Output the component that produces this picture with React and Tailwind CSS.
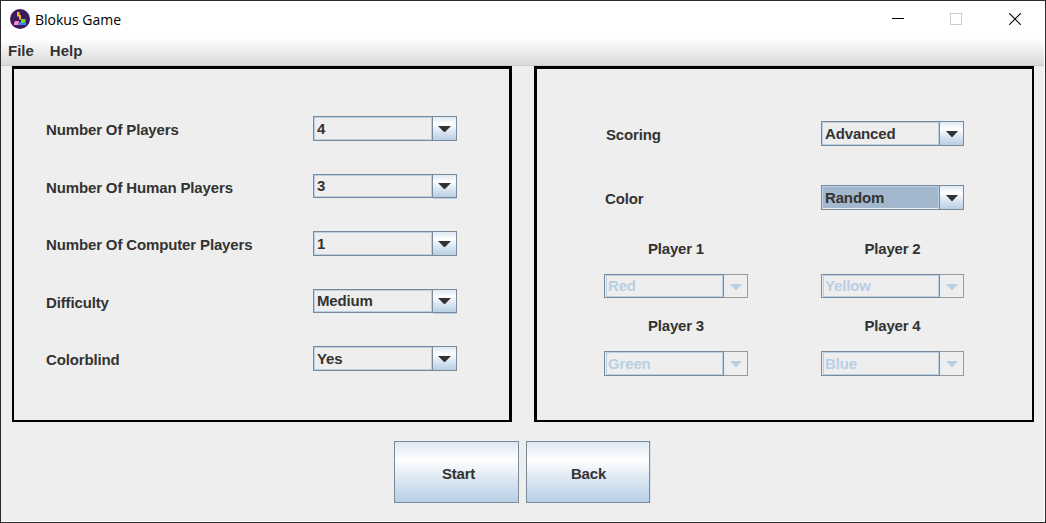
const LABEL = "font-['Liberation_Sans',Arial,sans-serif] text-[15px] leading-[18px] font-bold text-[#333] whitespace-nowrap";

function Arrow({ disabled, wide, className }) {
  return (
    <svg width="13" height="7" viewBox="0 0 13 7" className={className}>
      <path d={wide ? "M0 0H13L7 6H6Z" : "M0 0H12L6.5 6H5.5Z"} fill={disabled ? "#b8cfe5" : "#333"} />
    </svg>
  );
}

function Combo({ value, width = "w-[144px]", height = "h-[25px]", disabled, focused, short }) {
  const wide = width === "w-[144px]" && !disabled;
  const raised = short || height === "h-[24px]";
  return (
    <div className={`${LABEL} ${width} ${short ? "h-[24px]" : height} flex shrink-0 tracking-[-0.15px]`}>
      <div className="flex flex-1 border border-[#7a8a99]">
        <div
          className={`flex flex-1 border border-[#b8cfe5] ${disabled ? "ml-px pl-px" : "pl-[2px]"} ${focused ? "border-b-[#eee] bg-[#a3b8cc]" : ""}`}
        >
          <span className={`${raised ? "mt-px" : "mt-[2px]"} ${disabled ? "text-[#b8cfe5]" : ""}`}>{value}</span>
        </div>
      </div>
      <div
        className={`flex w-[24px] items-start border-y border-r ${
          disabled
            ? "border-[#999]"
            : "border-[#7a8a99] bg-[linear-gradient(180deg,#dde8f3_0%,#ffffff_30%,#dde8f3_60%,#b8cfe5_100%)]"
        } ${short ? "shadow-[0_1px_0_#b8cfe5]" : ""} ${wide ? "pl-[5px]" : "pl-[6px]"}`}
      >
        <Arrow disabled={disabled} wide={wide} className={short ? "mt-[8px]" : "mt-[9px]"} />
      </div>
    </div>
  );
}

function Row({ label, children, className }) {
  return (
    <div className={`flex items-start justify-between ${className}`}>
      <span className={`${LABEL} mt-[5px] tracking-[-0.14px]`}>{label}</span>
      {children}
    </div>
  );
}

function Player({ name, value, ...combo }) {
  return (
    <div className="flex flex-col items-center">
      <span className={`${LABEL} tracking-[-0.2px]`}>{name}</span>
      <div className="mt-4">
        <Combo value={value} disabled {...combo} />
      </div>
    </div>
  );
}

function BigButton({ children, className }) {
  return (
    <button
      className={`${LABEL} ${className} h-[62px] border border-[#7a8a99] bg-[linear-gradient(180deg,#dde8f3_0%,#ffffff_30%,#dde8f3_60%,#b8cfe5_100%)] pt-1 tracking-[-0.2px]`}
    >
      {children}
    </button>
  );
}

function AppIcon() {
  return (
    <svg width="20" height="20" viewBox="0 0 20 20">
      <circle cx="10" cy="10" r="10" fill="#3b1a5e" />
      <path d="M7 3h2.5v3h1.5v4.5h-2V7.5H7Z" fill="#fcb72b" />
      <path d="M5 12H9L8.5 16H4V14Z" fill="#f98bc8" />
      <path d="M9 13H16V16H8.5Z" fill="#2f88ff" />
      <path d="M11 10H15.5V13L13 14H11Z" fill="#7bd51d" />
    </svg>
  );
}

export default function App() {
  return (
    <div className="flex h-[523px] w-[1046px] flex-col border border-[#2b2b2b] bg-white pr-px pb-px">
      <header className="flex h-[37px] shrink-0 items-center bg-white pb-px pl-[9px]">
        <AppIcon />
        <h1 className="mt-px ml-[5px] font-['Open_Sans','Noto_Sans',sans-serif] text-[14px] text-black">Blokus Game</h1>
        <div className="ml-auto flex items-center pr-[23px]">
          <svg width="12" height="12" viewBox="0 0 12 12" shapeRendering="crispEdges">
            <path d="M0 5H12V6H0Z" fill="#000" />
          </svg>
          <svg width="12" height="12" viewBox="0 0 12 12" className="mr-[47px] ml-[46px]">
            <rect x=".5" y=".5" width="11" height="11" fill="none" stroke="#ccc" />
          </svg>
          <svg width="12" height="12" viewBox="0 0 12 12">
            <path d="M.2 .2L11.8 11.8M11.8 .2L.2 11.8" stroke="#000" strokeWidth="1.1" />
          </svg>
        </div>
      </header>
      <nav className={`${LABEL} flex h-[28px] shrink-0 items-center gap-4 border-b border-[#ccc] bg-linear-to-b from-white to-[#dadada] pb-px pl-[7px]`}>
        <span>File</span>
        <span>Help</span>
      </nav>
      <main className="flex flex-1 flex-col bg-[#eee]">
        <div className="flex gap-[22px] pl-[11px]">
          <section className="h-[356px] w-[500px] border-t-3 border-r-3 border-b-2 border-l-2 border-black pt-[47px] pr-[52px] pl-8">
            <Row label="Number Of Players" className="h-[58px]"><Combo value="4" /></Row>
            <Row label="Number Of Human Players" className="h-[57px]"><Combo value="3" short /></Row>
            <Row label="Number Of Computer Players" className="h-[58px]"><Combo value="1" /></Row>
            <Row label="Difficulty" className="h-[57px]"><Combo value="Medium" short /></Row>
            <Row label="Colorblind" className="h-[58px]"><Combo value="Yes" /></Row>
          </section>
          <section className="h-[356px] w-[500px] border-t-3 border-r-2 border-b-2 border-l-3 border-black pt-[52px] pr-[68px] pl-[67px]">
            <Row label="Scoring" className="h-[64px] pl-[2px]"><Combo value="Advanced" width="w-[143px]" /></Row>
            <Row label="Color" className="h-[55px] pl-px"><Combo value="Random" width="w-[143px]" focused /></Row>
            <div className="flex justify-between">
              <Player name="Player 1" value="Red" height="h-[24px]" />
              <Player name="Player 2" value="Yellow" width="w-[143px]" height="h-[24px]" />
            </div>
            <div className="mt-[19px] flex justify-between">
              <Player name="Player 3" value="Green" />
              <Player name="Player 4" value="Blue" width="w-[143px]" />
            </div>
          </section>
        </div>
        <div className="mt-[19px] flex gap-[7px] pl-[393px]">
          <BigButton className="w-[125px] pl-[4px]">Start</BigButton>
          <BigButton className="w-[124px] pl-[1px] shadow-[1px_0_0_#d5e0ea]">Back</BigButton>
        </div>
      </main>
    </div>
  );
}
